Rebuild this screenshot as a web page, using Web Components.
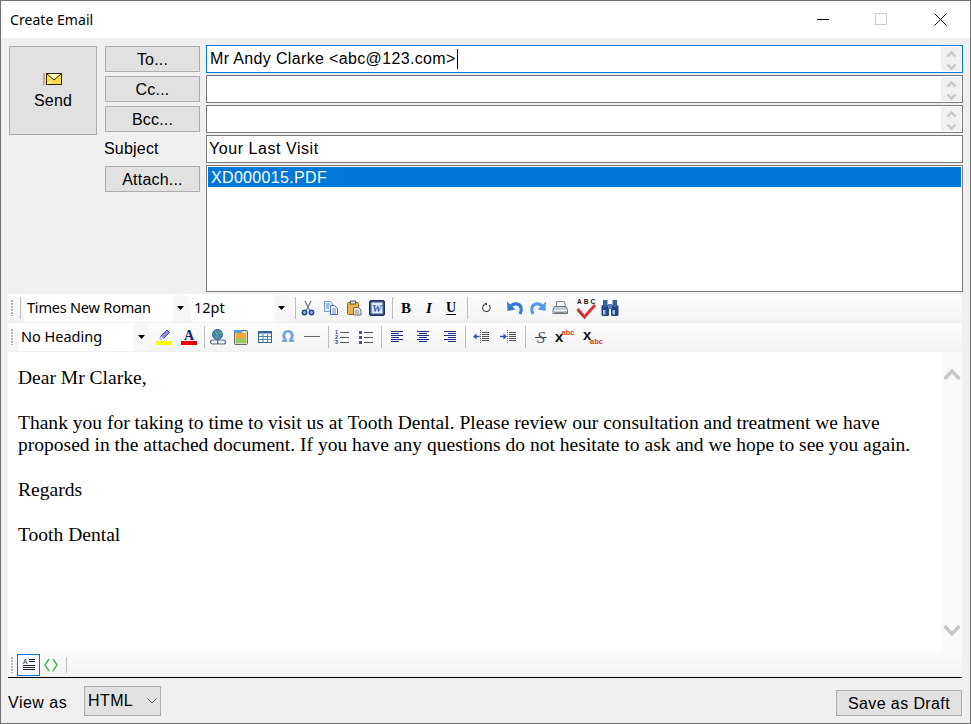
<!DOCTYPE html>
<html>
<head>
<meta charset="utf-8">
<title>Create Email</title>
<style>
  html, body { margin: 0; padding: 0; height: 100%; background: #f0f0f0; }
  body { font-family: "Liberation Sans", Arial, sans-serif; color: #000; }
</style>
</head>
<body>
<email-window>
  <title-bar slot="title">Create Email</title-bar>

  <mail-header slot="header">
    <form-button slot="send" big>
      <svg slot="icon" width="20" height="14" viewBox="0 0 20 14">
        <path d="M1 2h2M1 4h2M1 6h2M1 8h2M1 10h2M1 12h2" stroke="#b5713c" stroke-width="1"/>
        <rect x="4.500" y="1.500" width="15" height="11" fill="#ffdb45" stroke="#2e2606"/>
        <path d="M5 2l7 6 7-6" fill="#fff6b8" stroke="#2e2606"/>
        <path d="M5 12l5-3" stroke="#fff" fill="none"/>
      </svg>
      Send
    </form-button>
    <form-button slot="to">To...</form-button>
    <form-button slot="cc">Cc...</form-button>
    <form-button slot="bcc">Bcc...</form-button>
    <span slot="subject-label">Subject</span>
    <form-button slot="attach">Attach...</form-button>
    <address-field slot="to-field" focused spin>Mr Andy Clarke &lt;abc@123.com&gt;</address-field>
    <address-field slot="cc-field" spin></address-field>
    <address-field slot="bcc-field" spin></address-field>
    <address-field slot="subject-field">Your Last Visit</address-field>
    <attach-list slot="attach-field"><attach-item>XD000015.PDF</attach-item></attach-list>
  </mail-header>

  <editor-toolbar slot="bar1" h="28">
    <tb-grip></tb-grip>
    <tb-sep w="8"></tb-sep>
    <tb-combo w="164" tw="149" style="letter-spacing:-.2px">Times New Roman</tb-combo>
    <tb-combo w="98" tw="83">12pt</tb-combo>
    <tb-sep w="7"></tb-sep>
    <tb-btn icon="cut" w="18"></tb-btn>
    <tb-btn icon="copy" w="27"></tb-btn>
    <tb-btn icon="paste" w="20"></tb-btn>
    <tb-btn icon="word" w="26"></tb-btn>
    <tb-sep w="5"></tb-sep>
    <tb-btn icon="bold" w="22"></tb-btn>
    <tb-btn icon="italic" w="24"></tb-btn>
    <tb-btn icon="underline" w="20"></tb-btn>
    <tb-sep w="13"></tb-sep>
    <tb-btn icon="refresh" w="26"></tb-btn>
    <tb-btn icon="undo" w="30"></tb-btn>
    <tb-btn icon="redo" w="16"></tb-btn>
    <tb-btn icon="print" w="28"></tb-btn>
    <tb-btn icon="spell" w="24"></tb-btn>
    <tb-btn icon="find" w="24"></tb-btn>
  </editor-toolbar>

  <editor-toolbar slot="bar2" h="28">
    <tb-grip></tb-grip>
    <tb-combo w="131" tw="116" style="margin-left:2px">No Heading</tb-combo>
    <tb-btn icon="highlight" w="24"></tb-btn>
    <tb-btn icon="fontcolor" w="26"></tb-btn>
    <tb-sep w="5"></tb-sep>
    <tb-btn icon="link" w="22"></tb-btn>
    <tb-btn icon="image" w="23"></tb-btn>
    <tb-btn icon="table" w="26"></tb-btn>
    <tb-btn icon="omega" w="20"></tb-btn>
    <tb-btn icon="hr" w="28"></tb-btn>
    <tb-sep w="4"></tb-sep>
    <tb-btn icon="ol" w="24"></tb-btn>
    <tb-btn icon="ul" w="24"></tb-btn>
    <tb-sep w="7"></tb-sep>
    <tb-btn icon="alignleft" w="23"></tb-btn>
    <tb-btn icon="aligncenter" w="30"></tb-btn>
    <tb-btn icon="alignright" w="24"></tb-btn>
    <tb-sep w="7"></tb-sep>
    <tb-btn icon="outdent" w="24"></tb-btn>
    <tb-btn icon="indent" w="30"></tb-btn>
    <tb-sep w="5"></tb-sep>
    <tb-btn icon="strike" w="25"></tb-btn>
    <tb-btn icon="sup" w="24"></tb-btn>
    <tb-btn icon="sub" w="30"></tb-btn>
  </editor-toolbar>

  <mail-body slot="editor">Dear Mr Clarke,<br><br>Thank you for taking to time to visit us at Tooth Dental. Please review our consultation and treatment we have<br>proposed in the attached document. If you have any questions do not hesitate to ask and we hope to see you again.<br><br>Regards<br><br>Tooth Dental</mail-body>

  <mode-bar slot="modes"></mode-bar>

  <mail-footer slot="footer"></mail-footer>
</email-window>

<script>
(function() {
    "use strict";

    const ICONS = {
        cut: `<path d="M5 1l4.500 9M11 1L6.500 10" stroke="#77839a" stroke-width="1.500" fill="none"/><circle cx="4.500" cy="12.500" r="2.200" fill="#9db4dc" stroke="#21439a" stroke-width="1.500"/><circle cx="11.500" cy="12.500" r="2.200" fill="#9db4dc" stroke="#21439a" stroke-width="1.500"/>`,
        copy: `<path d="M1.500 1.500h6l2 2v8h-8z" fill="#e6f0fb" stroke="#6d97c9"/><path d="M7.500 5.500h4l3 3v6h-7z" fill="#fff" stroke="#3f6fae"/><path d="M3 4h4M3 6h3M3 8h3M9 9h4M9 11h4M9 13h4" stroke="#5b86c0"/>`,
        paste: `<rect x="1.500" y="2.500" width="11" height="12" rx="1" fill="#e9b444" stroke="#8d6417"/><rect x="4.500" y="1" width="5" height="3" fill="#d9dfe7" stroke="#55585e"/><path d="M7.500 7.500h5l2.500 2.500v5h-7.500z" fill="#e8e8e8" stroke="#6d6d6d"/><path d="M9 11h4M9 13h4" stroke="#8a8a8a"/>`,
        word: `<rect x=".5" y=".5" width="15" height="15" rx="1.500" fill="#33508d" stroke="#1f2f5f"/><rect x="2.500" y="2.500" width="11" height="11" fill="#dfe9f7"/><text x="8" y="12" text-anchor="middle" font-family="Liberation Serif" font-weight="700" font-style="italic" font-size="11" fill="#2e5cb0">W</text>`,
        bold: `<text x="8" y="13" text-anchor="middle" font-family="Liberation Serif" font-weight="700" font-size="15" fill="#000">B</text>`,
        italic: `<text x="8" y="13" text-anchor="middle" font-family="Liberation Serif" font-weight="700" font-style="italic" font-size="15" fill="#000">I</text>`,
        underline: `<text x="8" y="12" text-anchor="middle" font-family="Liberation Serif" font-weight="700" font-size="14" fill="#000">U</text><path d="M3 14.500h10" stroke="#000"/>`,
        refresh: `<path d="M5.500 4.500A3.800 3.800 0 1 0 10 5" fill="none" stroke="#444" stroke-width="1.100"/><path d="M4.500 4l3.500-1.500v3z" fill="#444"/>`,
        undo: `<path d="M3.500 6.500c3-3.800 9-3.500 10.500 1 .6 2.200.1 4.500-1 6.500" fill="none" stroke="#2f7bd6" stroke-width="3.200"/><path d="M0 1.500l.5 9.500 8-1.500z" fill="#2f7bd6"/>`,
        redo: `<path d="M12.500 6.500c-3-3.800-9-3.500-10.500 1-.6 2.200-.1 4.500 1 6.500" fill="none" stroke="#5b9be3" stroke-width="3.200"/><path d="M16 1.500l-.5 9.500-8-1.500z" fill="#5b9be3"/>`,
        print: `<path d="M4.500 1.500h8l1 5h-9z" fill="#f4f4f4" stroke="#7c8591"/><path d="M2.500 6.500h11.500l1.500 3v4h-14.500v-4z" fill="#c3ccd6" stroke="#6d7885"/><path d="M2 10.500h13" stroke="#f2f5f8"/><rect x="3" y="12" width="9" height="1" fill="#7d8a98"/><rect x="13" y="11.500" width="1.500" height="1.500" fill="#3eb04a"/>`,
        spell: `<text x="1" y="6.500" font-family="Liberation Sans" font-weight="700" font-size="6.500" fill="#111" letter-spacing="2">ABC</text><path d="M1.500 12l7 8L19 8" fill="none" stroke="#e0323a" stroke-width="3"/><path d="M2 14l6.500 7" stroke="#8f1a20" fill="none"/>`,
        find: `<rect x=".5" y="5" width="7.500" height="11" rx="1.500" fill="#27437f"/><rect x="10" y="5" width="7.500" height="11" rx="1.500" fill="#27437f"/><rect x="2" y="0" width="4.500" height="7" fill="#3d5d9f"/><rect x="11.500" y="0" width="4.500" height="7" fill="#3d5d9f"/><rect x="7" y="4" width="4" height="5" fill="#5e7fba"/><rect x="2" y="10" width="2.500" height="4.500" fill="#9cc0ea"/><rect x="11.500" y="10" width="2.500" height="4.500" fill="#9cc0ea"/>`,
        highlight: `<path d="M4 10l1-3 6-6 2.500 2.500-6 6z" fill="#8d8fdc" stroke="#4c4f9c"/><path d="M4 10l1-3 2.500 2.500z" fill="#fff"/><rect x="0" y="12" width="16" height="4" fill="#ffff00"/>`,
        fontcolor: `<text x="8" y="10.500" text-anchor="middle" font-family="Liberation Serif" font-weight="700" font-size="14" fill="#0f1b77">A</text><rect x="0" y="12" width="16" height="4" fill="#f00000"/>`,
        link: `<circle cx="7.500" cy="5.500" r="5" fill="#3f87c4" stroke="#33608e"/><path d="M5 2.500c2 0 3 1 3 2.500s-2 1-2.500 2.500 1 2 2 2.500M10 2c1 1 2 1.500 2.500 3-1.500 1-2.500 .5-2.500-3z" fill="#6fae4f"/><rect x=".5" y="11" width="8" height="4" rx="2" fill="#e8eef3" stroke="#566a7f" stroke-width="1.200"/><rect x="7.500" y="11" width="8" height="4" rx="2" fill="#e8eef3" stroke="#566a7f" stroke-width="1.200"/>`,
        image: `<rect x="1.500" y="1.500" width="13" height="14" rx="1" fill="#d8d8c8" stroke="#5f6a70"/><rect x="3" y="4" width="10" height="10" fill="#f3a634"/><rect x="3" y="9" width="10" height="5" fill="#9fca55"/><rect x="1" y="1" width="8" height="3" fill="#4da3d8"/>`,
        table: `<rect x="1.500" y="2.500" width="13" height="11" fill="#fff" stroke="#2f6497"/><rect x="2" y="3" width="12" height="1.500" fill="#2f6497"/><path d="M2 7.500h12M2 10.500h12M6 5v8M10.500 5v8" stroke="#4d82b3"/>`,
        omega: `<text x="8" y="13" text-anchor="middle" font-family="DejaVu Sans" font-weight="700" font-size="15" fill="#6fa3e6">Ω</text>`,
        hr: `<path d="M0 7.500h16" stroke="#666"/>`,
        ol: `<text x="1" y="5" font-family="Liberation Sans" font-weight="700" font-size="5.500" fill="#2b3f9e">1</text><text x="1" y="10" font-family="Liberation Sans" font-weight="700" font-size="5.500" fill="#2b3f9e">2</text><text x="1" y="15" font-family="Liberation Sans" font-weight="700" font-size="5.500" fill="#2b3f9e">3</text><path d="M6 3.500h9M6 8.500h9M6 13.500h9" stroke="#555"/>`,
        ul: `<path d="M1 2h3v3H1zM1 7h3v3H1zM1 12h3v3H1z" fill="#4b4fa8"/><path d="M6 3.500h9M6 8.500h9M6 13.500h9" stroke="#555"/>`,
        alignleft: `<path d="M2 2.500h12M2 4.500h8M2 6.500h12M2 8.500h8M2 10.500h12M2 12.500h8" stroke="#1c2a8c"/>`,
        aligncenter: `<path d="M2 2.500h12M4 4.500h8M2 6.500h12M4 8.500h8M2 10.500h12M4 12.500h8" stroke="#1c2a8c"/>`,
        alignright: `<path d="M2 2.500h12M6 4.500h8M2 6.500h12M6 8.500h8M2 10.500h12M6 12.500h8" stroke="#1c2a8c"/>`,
        outdent: `<path d="M7.500 1v14" stroke="#666" stroke-dasharray="1 1"/><path d="M9 3.500h7M9 5.500h7M9 7.500h7M9 9.500h7M9 11.500h7" stroke="#555"/><path d="M6.500 7.500H2" stroke="#2d4fb0" stroke-width="1.500"/><path d="M3.500 4.500v6L0 7.500z" fill="#2d4fb0"/>`,
        indent: `<path d="M7.500 1v14" stroke="#666" stroke-dasharray="1 1"/><path d="M9 3.500h7M9 5.500h7M9 7.500h7M9 9.500h7M9 11.500h7" stroke="#555"/><path d="M0 7.500h4" stroke="#2d4fb0" stroke-width="1.500"/><path d="M3.500 4.500v6L7 7.500z" fill="#2d4fb0"/>`,
        strike: `<text x="8" y="13.500" text-anchor="middle" font-family="Liberation Serif" font-style="italic" font-size="16" fill="#555">S</text><path d="M2 8.500h12" stroke="#555"/>`,
        sup: `<text x="0" y="13" font-family="Liberation Sans" font-weight="700" font-size="15" fill="#111">x</text><text x="6.500" y="6" font-family="Liberation Sans" font-weight="700" font-size="7.500" fill="#d9391e">abc</text>`,
        sub: `<text x="1" y="11" font-family="Liberation Sans" font-weight="700" font-size="15" fill="#111">x</text><text x="8" y="15" font-family="Liberation Sans" font-weight="700" font-size="7.500" fill="#d9391e">abc</text>`,
        design: `<text x="2" y="6.500" font-family="Liberation Sans" font-size="6.500" fill="#222">A</text><path d="M8 2.500h6M8 4.500h6M2 8.500h12M2 10.500h12M2 12.500h12" stroke="#222"/>`,
        source: `<path d="M6 2L2 8l4 6M10 2l4 6-4 6" fill="none" stroke="#4fb35c" stroke-width="1.500"/>`
    };

    const WIDE_ICONS = { spell: 21, find: 18, sup: 20, sub: 21 };

    // small helper so every class does not repeat the same three lines
    function shadow(el, html) {
        var root = el.attachShadow({mode: "open"});
        root.innerHTML = html;
        return root;
    }

    class EmailWindow extends HTMLElement {
        constructor() {
            super();
            shadow(this, `
                <style>
                    :host { display: flex; flex-direction: column; box-sizing: border-box; width: 971px; height: 724px; border: 1px solid #707070; background: #f0f0f0; overflow: hidden; }
                    .bars { display: flex; flex-direction: column; gap: 1px; margin: 2px 8px 0 7px; }
                </style>
                <slot name="title"></slot>
                <slot name="header"></slot>
                <div class="bars"><slot name="bar1"></slot><slot name="bar2"></slot></div>
                <slot name="editor"></slot>
                <slot name="modes"></slot>
                <slot name="footer"></slot>
            `);
        }
    }

    class TitleBar extends HTMLElement {
        constructor() {
            super();
            shadow(this, `
                <style>
                    :host { display: flex; align-items: center; height: 37px; flex: none; background: #fff; padding-left: 9px; font: 14px "Noto Sans", sans-serif; color: #000; }
                    .text { flex: 1; margin-top: -1px; letter-spacing: .05px; }
                    .caption { display: flex; }
                    .caption div { width: 58px; height: 36px; padding-bottom: 1px; display: flex; align-items: center; justify-content: center; }
                    svg { display: block; }
                </style>
                <span class="text"><slot></slot></span>
                <div class="caption">
                    <div><svg width="12" height="12"><path d="M0 6.500h12" stroke="#000"/></svg></div>
                    <div><svg width="12" height="12"><rect x=".5" y=".5" width="11" height="11" fill="none" stroke="#ccc"/></svg></div>
                    <div style="width:60px"><svg width="13" height="13"><path d="M.5 .5l12 12M12.500 .5l-12 12" stroke="#000"/></svg></div>
                </div>
            `);
        }
    }

    class MailHeader extends HTMLElement {
        constructor() {
            super();
            shadow(this, `
                <style>
                    :host { display: grid; flex: none; grid-template-columns: 88px 103px 763px; grid-template-rows: 28px 28px 28px 28px 127px; row-gap: 2px; padding: 7px 7px 0 8px; font: 16px "Liberation Sans", sans-serif; }
                    .send { grid-row: 1 / span 4; grid-column: 1; height: 89px; margin-top: 1px; display: flex; }
                    .btn { grid-column: 2; display: flex; margin-left: 8px; height: 26px; margin-top: 1px; }
                    .label { grid-column: 2; display: flex; align-items: center; margin-left: 7px; margin-top: -1px; letter-spacing: .2px; }
                    .field { grid-column: 3; margin-left: 6px; min-width: 0; display: flex; }
                    ::slotted(*) { flex: 1; }
                </style>
                <div class="send"><slot name="send"></slot></div>
                <div class="btn" style="grid-row:1"><slot name="to"></slot></div>
                <div class="btn" style="grid-row:2"><slot name="cc"></slot></div>
                <div class="btn" style="grid-row:3"><slot name="bcc"></slot></div>
                <div class="label" style="grid-row:4"><slot name="subject-label"></slot></div>
                <div class="btn" style="grid-row:5"><slot name="attach"></slot></div>
                <div class="field" style="grid-row:1"><slot name="to-field"></slot></div>
                <div class="field" style="grid-row:2"><slot name="cc-field"></slot></div>
                <div class="field" style="grid-row:3"><slot name="bcc-field"></slot></div>
                <div class="field" style="grid-row:4"><slot name="subject-field"></slot></div>
                <div class="field" style="grid-row:5"><slot name="attach-field"></slot></div>
            `);
        }
    }

    class FormButton extends HTMLElement {
        constructor() {
            super();
            shadow(this, `
                <style>
                    :host { display: flex; flex: 1; flex-direction: column; align-items: center; justify-content: center; box-sizing: border-box; padding-top: 2px; background: #e1e1e1; border: 1px solid #adadad; font: 16px "Liberation Sans", sans-serif; letter-spacing: .2px; color: #000; }
                    :host([big]) { gap: 6px; padding-top: 0; }
                    ::slotted(svg) { display: block; margin-left: -2px; }
                </style>
                <slot name="icon"></slot>
                <div><slot></slot></div>
            `);
        }
    }

    class AddressField extends HTMLElement {
        constructor() {
            super();
            var spin = this.hasAttribute("spin") ? `
                <div class="spin">
                    <svg width="11" height="24" viewBox="0 0 11 24" fill="none" stroke="#c8c8c8" stroke-width="2.400">
                        <path d="M1.500 9.500l4-4 4 4"/>
                        <path d="M1.500 17.500l4 4 4-4"/>
                    </svg>
                </div>` : "";
            var caret = this.hasAttribute("focused") ? `<span class="caret"></span>` : "";
            shadow(this, `
                <style>
                    :host { display: flex; align-items: center; box-sizing: border-box; height: 28px; background: #fff; border: 1px solid #7a7a7a; padding: 1px 1px 1px 3px; font: 16px "Liberation Sans", sans-serif; letter-spacing: .35px; white-space: nowrap; color: #000; }
                    :host([focused]) { border-color: #0078d7; }
                    :host(:not([spin])) { padding-left: 2px; letter-spacing: .55px; }
                    .text { flex: 1; display: flex; align-items: center; height: 100%; margin-top: -1px; }
                    .caret { display: inline-block; width: 1px; height: 20px; background: #000; margin-left: 1px; }
                    .spin { width: 20px; height: 24px; background: #f0f0f0; display: flex; align-items: center; justify-content: center; }
                    svg { display: block; }
                </style>
                <div class="text"><span><slot></slot></span>${caret}</div>
                ${spin}
            `);
        }
    }

    class AttachList extends HTMLElement {
        constructor() {
            super();
            shadow(this, `
                <style>
                    :host { display: block; box-sizing: border-box; height: 127px; background: #fff; border: 1px solid #7a7a7a; padding: 1px; }
                </style>
                <slot></slot>
            `);
        }
    }

    class AttachItem extends HTMLElement {
        constructor() {
            super();
            shadow(this, `
                <style>
                    :host { display: flex; align-items: center; box-sizing: border-box; height: 20px; background: #0078d7; color: #fff; padding: 2px 0 0 3px; font: 16px "Liberation Sans", sans-serif; letter-spacing: .33px; }
                </style>
                <slot></slot>
            `);
        }
    }

    class EditorToolbar extends HTMLElement {
        constructor() {
            super();
            shadow(this, `
                <style>
                    :host { display: flex; align-items: center; box-sizing: border-box; height: ${this.getAttribute("h")}px; padding-left: 1px; background: linear-gradient(#fdfdfd, #f3f3f3); }
                </style>
                <slot></slot>
            `);
        }
    }

    class TbGrip extends HTMLElement {
        constructor() {
            super();
            shadow(this, `
                <style>
                    :host { display: block; width: 2px; height: 16px; margin: 0 3px 0 2px; flex: none; background: repeating-linear-gradient(#b4b4b4 0 2px, transparent 2px 3px); }
                </style>
            `);
        }
    }

    class TbSep extends HTMLElement {
        constructor() {
            super();
            shadow(this, `
                <style>
                    :host { display: flex; justify-content: center; width: ${this.getAttribute("w") || 7}px; flex: none; }
                    div { width: 1px; height: 22px; background: #bdbdbd; }
                </style>
                <div></div>
            `);
        }
    }

    class TbCombo extends HTMLElement {
        constructor() {
            super();
            var w = this.getAttribute("w");
            var tw = this.getAttribute("tw");
            shadow(this, `
                <style>
                    :host { display: flex; flex: none; width: ${w}px; height: 27px; margin-right: 3px; background: #fff; font: 14.5px "Noto Sans", sans-serif; color: #000; }
                    .text { width: ${tw}px; box-sizing: border-box; padding: 0 0 3px 3px; display: flex; align-items: center; white-space: nowrap; overflow: hidden; }
                    .arrow { flex: 1; display: flex; align-items: center; justify-content: center; background: #f7f7f7; }
                    svg { display: block; }
                </style>
                <div class="text"><slot></slot></div>
                <div class="arrow"><svg width="7" height="4"><path d="M0 0h7L3.500 4z" fill="#000"/></svg></div>
            `);
        }
    }

    class TbBtn extends HTMLElement {
        constructor() {
            super();
            var name = this.getAttribute("icon");
            var w = this.getAttribute("w") || 23;
            var size = WIDE_ICONS[name] || 16;
            var h = name === "spell" ? 22 : 16;
            shadow(this, `
                <style>
                    :host { display: flex; align-items: center; justify-content: center; flex: none; width: ${w}px; height: 24px; }
                    svg { display: block; flex: none; overflow: visible; }
                </style>
                <svg width="${size}" height="${h}" viewBox="0 0 ${size} ${h}">${ICONS[name]}</svg>
            `);
        }
    }

    class MailBody extends HTMLElement {
        constructor() {
            super();
            shadow(this, `
                <style>
                    :host { display: flex; flex: none; height: 300px; margin: 1px 8px 0 7px; background: #fff; font: 19.55px/22.4px "Liberation Serif", "Times New Roman", serif; color: #000; }
                    .doc { flex: 1; padding: 15px 0 0 10px; white-space: nowrap; overflow: hidden; }
                    .bar { width: 20px; flex: none; background: #fafafa; display: flex; flex-direction: column; justify-content: space-between; align-items: center; padding: 15px 0 14px; box-sizing: border-box; }
                    svg { display: block; }
                </style>
                <div class="doc"><slot></slot></div>
                <div class="bar">
                    <svg width="18" height="14"><path d="M1.500 12L9 4l7.500 8" fill="none" stroke="#c8c8c8" stroke-width="3.500"/></svg>
                    <svg width="18" height="14"><path d="M1.500 2L9 10l7.500-8" fill="none" stroke="#c8c8c8" stroke-width="3.500"/></svg>
                </div>
            `);
        }
    }

    class ModeBar extends HTMLElement {
        constructor() {
            super();
            shadow(this, `
                <style>
                    :host { display: flex; align-items: center; flex: none; box-sizing: border-box; height: 26px; margin: 0 8px 0 7px; background: linear-gradient(#fbfbfb, #f2f2f2); border-bottom: 1px solid #000; padding-left: 3px; }
                    .grip { width: 2px; height: 16px; margin-right: 4px; background: repeating-linear-gradient(#b4b4b4 0 2px, transparent 2px 3px); }
                    .mode { width: 23px; height: 22px; box-sizing: border-box; display: flex; align-items: center; justify-content: center; }
                    .on { border: 1px solid #0078d7; background: #f5f9fd; }
                    .sep { width: 1px; height: 16px; background: #bdbdbd; margin-left: 4px; }
                    svg { display: block; }
                </style>
                <div class="grip"></div>
                <div class="mode on"><svg width="16" height="16" viewBox="0 0 16 16">${ICONS.design}</svg></div>
                <div class="mode" style="margin-left:-1px"><svg width="16" height="16" viewBox="0 0 16 16">${ICONS.source}</svg></div>
                <div class="sep"></div>
            `);
        }
    }

    class MailFooter extends HTMLElement {
        constructor() {
            super();
            shadow(this, `
                <style>
                    :host { display: flex; flex: 1; padding: 8px 8px 0 7px; font: 16px "Liberation Sans", sans-serif; letter-spacing: .4px; color: #000; }
                    .label { width: 76px; margin-top: 8px; height: 18px; line-height: 18px; letter-spacing: .5px; }
                    .select { box-sizing: border-box; width: 77px; height: 30px; background: #e1e1e1; border: 1px solid #adadad; display: flex; align-items: center; padding-left: 3px; }
                    .select span { flex: 1; margin-top: -1px; }
                    .select svg { margin-right: 3px; }
                    .spacer { flex: 1; }
                    .draft { box-sizing: border-box; width: 126px; height: 26px; margin-top: 4px; padding-top: 1px; background: #e1e1e1; border: 1px solid #adadad; display: flex; align-items: center; justify-content: center; }
                </style>
                <div class="label">View as</div>
                <div class="select"><span>HTML</span><svg width="10" height="6"><path d="M.5 .5L5 5l4.500-4.500" fill="none" stroke="#555"/></svg></div>
                <div class="spacer"></div>
                <div class="draft">Save as Draft</div>
            `);
        }
    }

    customElements.define("email-window", EmailWindow);
    customElements.define("title-bar", TitleBar);
    customElements.define("mail-header", MailHeader);
    customElements.define("form-button", FormButton);
    customElements.define("address-field", AddressField);
    customElements.define("attach-list", AttachList);
    customElements.define("attach-item", AttachItem);
    customElements.define("editor-toolbar", EditorToolbar);
    customElements.define("tb-grip", TbGrip);
    customElements.define("tb-sep", TbSep);
    customElements.define("tb-combo", TbCombo);
    customElements.define("tb-btn", TbBtn);
    customElements.define("mail-body", MailBody);
    customElements.define("mode-bar", ModeBar);
    customElements.define("mail-footer", MailFooter);
})();
</script>
</body>
</html>
